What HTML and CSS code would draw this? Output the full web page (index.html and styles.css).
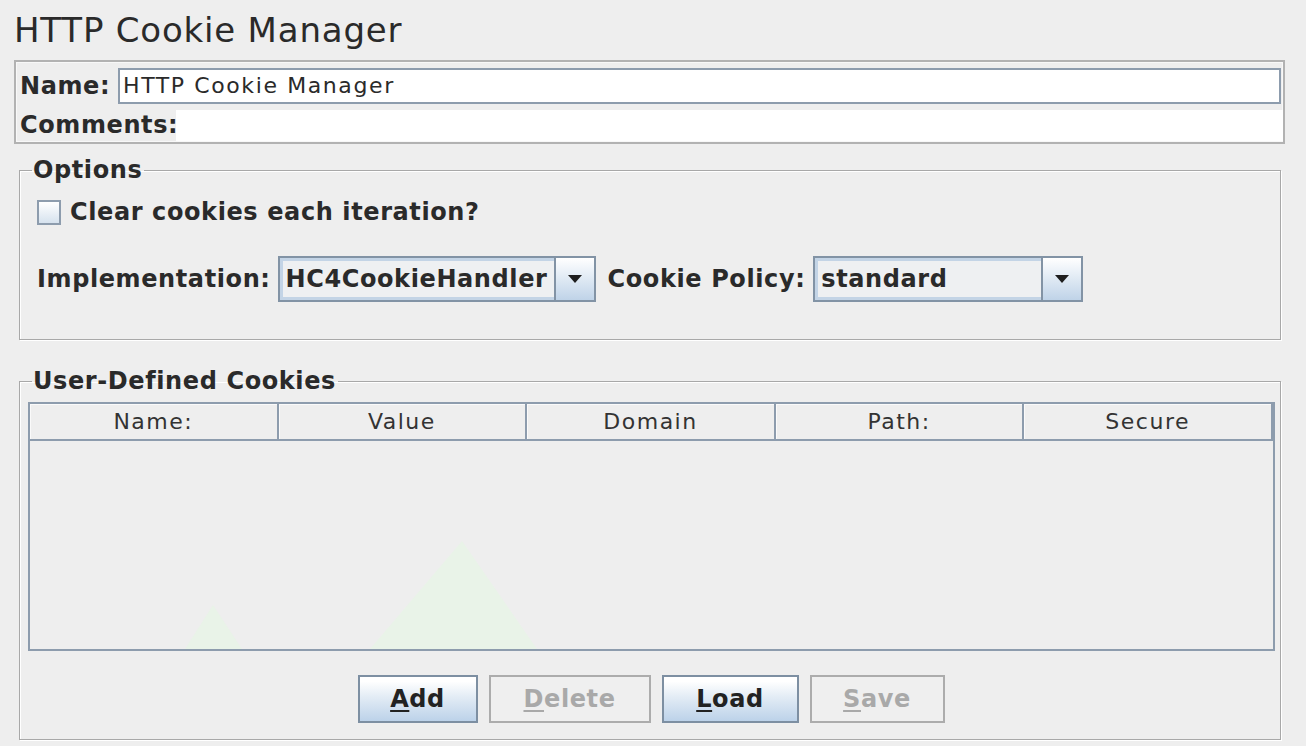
FILE: index.html
```html
<!DOCTYPE html>
<html>
<head>
<meta charset="utf-8">
<link rel="stylesheet" href="styles.css">
</head>
<body>
<div class="page">
  <h1 class="title">HTTP Cookie Manager</h1>
  <div class="namepanel">
    <div class="row name-row">
      <span class="lbl">Name:</span>
      <div class="textfield">HTTP Cookie Manager</div>
    </div>
    <div class="row comments-row">
      <span class="lbl">Comments:</span>
      <div class="comments-area"></div>
    </div>
  </div>

  <fieldset class="group options">
    <legend>Options</legend>
    <div class="group-body options-body">
      <label class="check-row">
        <span class="checkbox"></span>
        <span class="lbl">Clear cookies each iteration?</span>
      </label>
      <div class="impl-row">
        <span class="lbl">Implementation:</span>
        <div class="combo combo-impl">
          <span class="combo-text">HC4CookieHandler</span>
          <span class="combo-btn"><span class="arrow"></span></span>
        </div>
        <span class="lbl policy-lbl">Cookie Policy:</span>
        <div class="combo combo-policy">
          <span class="combo-text">standard</span>
          <span class="combo-btn"><span class="arrow"></span></span>
        </div>
      </div>
    </div>
  </fieldset>

  <fieldset class="group cookies">
    <legend>User-Defined Cookies</legend>
    <div class="group-body cookies-body">
      <div class="table">
        <div class="thead">
          <div class="th">Name:</div>
          <div class="th">Value</div>
          <div class="th">Domain</div>
          <div class="th">Path:</div>
          <div class="th">Secure</div>
        </div>
        <div class="tbody">
          <svg class="watermark" width="600" height="120" viewBox="0 0 600 120">
            <polygon points="155,120 183,76 212,120" fill="#e9f3e8"/>
            <polygon points="340,120 432,12 507,120" fill="#e9f3e8"/>
          </svg>
        </div>
      </div>
      <div class="buttons">
        <button class="btn btn-add"><u>A</u>dd</button>
        <button class="btn btn-delete" disabled><u>D</u>elete</button>
        <button class="btn btn-load"><u>L</u>oad</button>
        <button class="btn btn-save" disabled><u>S</u>ave</button>
      </div>
    </div>
  </fieldset>
</div>
</body>
</html>
```

FILE: styles.css
```css
html, body {
  margin: 0;
  padding: 0;
  background: #eeeeee;
}
body {
  font-family: "DejaVu Sans", "Liberation Sans", sans-serif;
  color: #2b2b2b;
  width: 1306px;
  height: 746px;
  overflow: hidden;
}
.page {
  padding-top: 10px;
}
.title {
  margin: 0 0 0 14px;
  font-size: 34px;
  font-weight: normal;
  letter-spacing: 0.8px;
  line-height: 40px;
  height: 50px;
  color: #2a2a2a;
}
.lbl {
  font-weight: bold;
  font-size: 24px;
  letter-spacing: 0.6px;
  color: #2a2a2a;
  white-space: nowrap;
}
.namepanel {
  margin: 0 21px 0 14px;
  height: 80px;
  border: 2px solid #b2b2b2;
  box-shadow: inset 0 0 0 1px #f8f8f8;
  padding: 0 0 0 4px;
  display: flex;
  flex-direction: column;
}
.row {
  display: flex;
  align-items: center;
}
.name-row {
  height: 45px;
  padding-top: 1px;
}
.name-row .lbl {
  width: 98px;
}
.textfield {
  flex: 1;
  height: 32px;
  margin-right: 2px;
  background: #ffffff;
  border: 2px solid #8d9cad;
  box-shadow: inset 0 0 0 1px #ffffff;
  font-size: 22px;
  letter-spacing: 1.6px;
  line-height: 32px;
  padding-left: 3px;
  color: #2a2a2a;
}
.comments-row {
  height: 31px;
  margin-top: 2px;
  align-items: stretch;
}
.comments-row .lbl {
  width: 156px;
  line-height: 31px;
}
.comments-area {
  flex: 1;
  background: #ffffff;
}

.group {
  margin: 0 25px 0 19px;
  padding: 0;
  border: 1px solid #a8a8a8;
  box-shadow: 1px 1px 0 #ffffff, inset 1px 1px 0 #ffffff;
  min-width: 0;
}
.group legend {
  font-weight: bold;
  font-size: 24px;
  letter-spacing: 0.6px;
  line-height: 26px;
  margin-left: 12px;
  padding: 0 2px 0 1px;
  color: #2a2a2a;
}
.options {
  margin-top: 13px;
  height: 181px;
  box-sizing: content-box;
}
.options-body {
  padding: 17px 0 0 17px;
}
.check-row {
  display: flex;
  align-items: center;
  gap: 9px;
  height: 24px;
}
.checkbox {
  width: 20px;
  height: 21px;
  border: 2px solid #8d9cad;
  background: linear-gradient(#ffffff, #d6e2ee);
  display: inline-block;
}
.impl-row {
  display: flex;
  align-items: center;
  margin-top: 32px;
  height: 46px;
}
.combo {
  display: flex;
  height: 42px;
  border: 2px solid #8293a5;
  margin-left: 7px;
  background: #eef0f2;
}
.combo-text {
  flex: 1;
  font-weight: bold;
  font-size: 24px;
  letter-spacing: 0.6px;
  line-height: 36px;
  padding-left: 3px;
  border: 3px solid #c3d4e6;
  border-right: 0;
  color: #2a2a2a;
  white-space: nowrap;
  overflow: hidden;
}
.combo-impl { width: 314px; }
.combo-policy { width: 266px; margin-left: 8px; }
.combo-btn {
  width: 38px;
  border-left: 2px solid #8293a5;
  background: linear-gradient(#ffffff, #bfd3e8);
  display: flex;
  align-items: center;
  justify-content: center;
}
.arrow {
  width: 0;
  height: 0;
  border-left: 7px solid transparent;
  border-right: 7px solid transparent;
  border-top: 8px solid #1e1e1e;
}
.policy-lbl {
  margin-left: 12px;
}

.cookies {
  margin-top: 28px;
  height: 370px;
  box-sizing: content-box;
}
.cookies-body {
  padding: 8px 6px 0 8px;
}
.table {
  width: 1243px;
  border: 2px solid #8d9cad;
  height: 245px;
  display: flex;
  flex-direction: column;
}
.thead {
  display: flex;
  height: 37px;
}
.th {
  flex: 1;
  text-align: center;
  font-size: 22px;
  letter-spacing: 1.5px;
  line-height: 35px;
  color: #333;
  border-right: 2px solid #8d9cad;
  border-bottom: 2px solid #8d9cad;
  box-shadow: inset 1px 1px 0 #fafafa;
}
.tbody {
  flex: 1;
  position: relative;
  overflow: hidden;
}
.watermark {
  position: absolute;
  left: 0;
  bottom: 0;
}
.buttons {
  display: flex;
  justify-content: center;
  gap: 11px;
  margin-top: 24px;
}
.btn {
  height: 48px;
  font-family: "DejaVu Sans", sans-serif;
  font-weight: bold;
  font-size: 24px;
  letter-spacing: 0.6px;
  color: #222;
  border: 2px solid #7d8fa2;
  background: linear-gradient(#ffffff 10%, #e3ecf5 45%, #bcd2e9);
  padding: 0;
  margin: 0;
}
.btn u { text-decoration-thickness: 2px; text-underline-offset: 3px; }
.btn-add { width: 120px; }
.btn-delete { width: 162px; }
.btn-load { width: 137px; }
.btn-save { width: 135px; }
.btn:disabled {
  background: #efefef;
  border-color: #acacac;
  color: #a9a9a9;
}
```
